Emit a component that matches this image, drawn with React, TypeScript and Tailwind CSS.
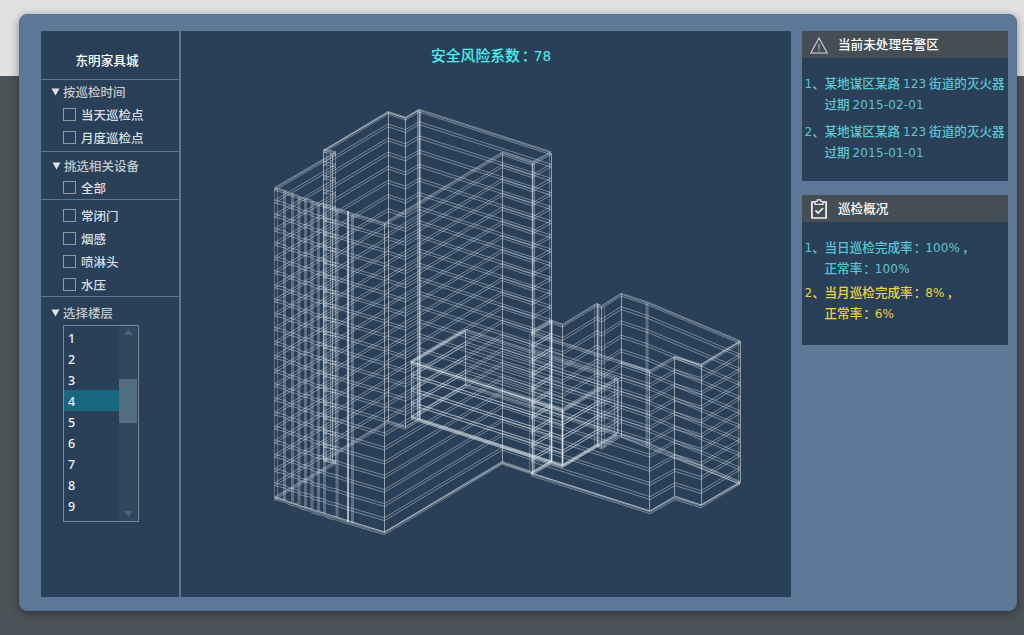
import React from "react";

type Point = [number, number];

const path = (points: Point[], dy: number) =>
  "M" + points.map(([x, y]) => `${x} ${(y + dy).toFixed(1)}`).join("L");

const levels = (parapet: number, count: number) => [
  0,
  ...Array.from({ length: count }, (_, i) => parapet + i * 14.13),
];

const towerFront: Point[] = [
  [274.5, 188.5], [285, 191], [289, 193.5], [297, 195.5], [301, 198], [310, 200],
  [314, 202.5], [323, 204.5], [328, 207], [337, 209], [347, 212.5], [384.5, 223.5],
];
const towerRight: Point[] = [[384.5, 223.5], [502, 153], [532, 163], [551, 152.5]];
const towerBack: Point[] = [[551, 152.5], [419, 110], [405.5, 118], [388, 112.2], [323.5, 151]];
const towerStair: Point[] = [[274.5, 188.5], [336, 152.5], [323.5, 150]];
const annex: Point[] = [
  [531, 333], [551, 321], [562.5, 325], [597, 304], [601.5, 306.5], [621, 294],
  [648, 303], [740, 341.5], [701, 365], [675, 357], [650, 371], [531, 333],
];
const bridge: Point[] = [[411, 362], [465.5, 330], [617, 378.5], [562.5, 410], [411, 362]];

function Floors({ points, steps, last = true }: { points: Point[]; steps: number[]; last?: boolean }) {
  return (
    <g fill="none" stroke="#d3dbe2" strokeWidth="0.9" strokeOpacity="0.5">
      {steps.map((s, i) => (
        <g key={i}>
          <path d={path(points, s - 0.8)} />
          <path d={path(points, s + 2)} />
          {(i === 0 || (last && i === steps.length - 1)) && <path d={path(points, s + 0.3)} />}
        </g>
      ))}
    </g>
  );
}

function Posts({ items, opacity, width = 1 }: { items: [number, number, number][]; opacity: number; width?: number }) {
  return (
    <g stroke="#e6ebee" strokeOpacity={opacity} strokeWidth={width}>
      {items.map(([x, a, b], i) => (
        <line key={i} x1={x} x2={x} y1={a} y2={b} />
      ))}
    </g>
  );
}

function Building() {
  const tower = levels(12.5, 22);
  const low = levels(13.5, 10);
  return (
    <svg className="block h-[450px] w-[490px]" viewBox="265 95 490 450">
      <Floors points={towerFront} steps={tower} />
      <Floors points={towerRight} steps={tower} />
      <Floors points={towerBack} steps={tower} />
      <Floors points={towerStair} steps={tower} />
      <Floors points={annex} steps={low} />
      <Floors points={bridge} steps={[0, 12.7, 26.8, 41, 55]} />
      <Posts
        opacity={0.3}
        items={[
          [274.5, 189, 497], [277.5, 189, 498], [326.5, 152, 461], [330.5, 152, 461],
          [335.5, 153, 463], [417.5, 110, 419], [420.5, 111, 420], [534.5, 163, 472],
          [549.5, 153, 462], [529.5, 334, 472], [738.5, 341, 484],
          [594.5, 304, 447], [604.5, 307, 448],
          [614.5, 378, 434], [618.5, 378, 434], [413.5, 362, 417], [417.5, 363, 419],
        ]}
      />
      <Posts
        opacity={0.27}
        width={3}
        items={[
          [284.5, 191, 500], [292.5, 194, 502], [299, 196, 504], [305.5, 199, 507],
          [312, 201, 509], [318.5, 204, 511], [324.5, 206, 513], [337, 209, 517],
          [352.5, 215, 523], [647, 303, 446], [419, 111, 420], [533, 163, 473], [598, 304, 447],
        ]}
      />
      <Posts
        opacity={0.55}
        items={[
          [323.5, 151, 460], [332.5, 154, 462], [388.5, 112, 422], [405.5, 118, 428],
          [419.5, 110, 419], [502.5, 153, 463], [532.5, 163, 473], [384.5, 223, 533],
          [551.5, 320, 462], [562.5, 325, 466], [597.5, 304, 447], [601.5, 306, 448],
          [621.5, 294, 437], [740.5, 341, 483], [701.5, 365, 505], [674.5, 357, 496],
          [649.5, 371, 511], [411.5, 362, 417], [465.5, 330, 386], [617.5, 378, 434],
          [551.5, 153, 320],
        ]}
      />
      <Posts
        opacity={0.75}
        width={1.8}
        items={[[348, 211, 522], [551.5, 320, 462], [562.5, 410, 466]]}
      />
      <g fill="none" stroke="#dce2e6" strokeOpacity="0.55">
        <path d="M323 151L388 112.5L405.5 118L419 110M274.5 497.5L384.5 532L502 463L532 473L551 461.5" />
        <path d="M411 417.5L562.5 466L617 434.5M465.5 330L411 362L562.5 410" strokeWidth="1.3" />
        <path d="M531 473L650 511L675 496L701 505L740 483M621 437L740 484M650 371L621 362M675 357L701 365L740 341.5" />
      </g>
    </svg>
  );
}

function Triangle() {
  return (
    <svg className="h-[8px] w-[9px] shrink-0" viewBox="0 0 9 8">
      <path d="M0.5 0.5H8.5L4.5 7.5Z" fill="#e2e4e6" />
    </svg>
  );
}

function GroupTitle({ children, className }: { children: React.ReactNode; className: string }) {
  return (
    <div className={`flex items-center gap-[3.5px] text-[12.5px] font-medium text-[#c3c8cc] ${className}`}>
      <Triangle />
      <span>{children}</span>
    </div>
  );
}

function CheckRow({ children, className = "h-[23px]" }: { children: React.ReactNode; className?: string }) {
  return (
    <div className={`flex items-center gap-[5px] pl-[22px] text-[12.5px] font-medium text-[#dcdfe1] ${className}`}>
      <span className="h-[13px] w-[13px] border border-[#92989d]" />
      <span className="pt-px">{children}</span>
    </div>
  );
}

function Num({ children }: { children: React.ReactNode }) {
  return <span className="font-['DejaVu_Sans','Noto_Sans_CJK_SC',sans-serif] text-[12px] font-normal tracking-[0.15px]">{children}</span>;
}

const Colon = () => <span className="inline-block w-[12.5px] whitespace-nowrap pl-[1px] tracking-[-4px]">：</span>;
const Comma = () => <span className="ml-[2px]">，</span>;

function Item({ index, first, second, className }: { index: number; first: React.ReactNode; second: React.ReactNode; className: string }) {
  return (
    <li className={`flex whitespace-nowrap text-[12.6px] font-medium leading-[21px] ${className}`}>
      <span className="w-[20px] shrink-0"><Num>{index}</Num>、</span>
      <div>
        <div className="h-[21px]">{first}</div>
        <div className="h-[21px]">{second}</div>
      </div>
    </li>
  );
}

export default function App() {
  const floors = [1, 2, 3, 4, 5, 6, 7, 8, 9];
  return (
    <div className="h-[635px] w-[1024px] overflow-hidden bg-[linear-gradient(to_bottom,#e2e2e2_76px,#4c5358_76px)] pl-[19px] pt-[14px] font-['Noto_Sans_CJK_SC',sans-serif]">
      <div className="flex h-[597px] w-[998px] rounded-[8px] border border-[#54718f] bg-[#5c7896] pl-[21px] pt-[16px] shadow-[0_2px_10px_rgba(0,0,0,0.4)]">
        <aside className="h-[566px] w-[138px] shrink-0 bg-[#2a4058]">
          <h1 className="flex h-[49px] items-center border-b border-[#5c7896] pl-[34.5px] pt-[10px] text-[12.6px] font-medium text-white">东明家具城</h1>
          <section className="h-[72px] border-b border-[#5c7896]">
            <GroupTitle className="h-[24px] pl-[9.5px]">按巡检时间</GroupTitle>
            <CheckRow className="-mt-px h-[23px]">当天巡检点</CheckRow>
            <CheckRow>月度巡检点</CheckRow>
          </section>
          <section className="h-[48px] border-b border-[#5c7896]">
            <GroupTitle className="h-[28px] pl-[10.5px]">挑选相关设备</GroupTitle>
            <CheckRow className="-mt-px h-[17px]">全部</CheckRow>
          </section>
          <section className="h-[97px] border-b border-[#5c7896] pt-[4px]">
            <CheckRow>常闭门</CheckRow>
            <CheckRow>烟感</CheckRow>
            <CheckRow>喷淋头</CheckRow>
            <CheckRow>水压</CheckRow>
          </section>
          <section>
            <GroupTitle className="h-[28px] pl-[9.5px] pt-[4px]">选择楼层</GroupTitle>
            <div className="ml-[22px] flex h-[197px] w-[76px] border border-[#7b8893] pr-px">
              <ul className="flex-1 pt-[1px] font-['Noto_Sans','Noto_Sans_CJK_SC',sans-serif] text-[12.5px] font-medium leading-[23px] text-[#f2f4f5]">
                {floors.map((n) => (
                  <li key={n} className={n === 4 ? "h-[21px] bg-[#17677e] pl-[4px]" : "h-[21px] pl-[4px]"}>{n}</li>
                ))}
              </ul>
              <div className="flex w-[18px] flex-col items-center bg-[#30475d] pb-[4px] pt-[3px]">
                <svg className="h-[6px] w-[9px]" viewBox="0 0 9 6"><path d="M4.5 0L9 6H0Z" fill="#48647a" /></svg>
                <div className="mt-[44px] h-[44px] w-[18px] bg-[#536e80]" />
                <svg className="mt-auto h-[6px] w-[9px]" viewBox="0 0 9 6"><path d="M4.5 6L9 0H0Z" fill="#48647a" /></svg>
              </div>
            </div>
          </section>
        </aside>

        <main className="ml-[2px] h-[566px] w-[610px] shrink-0 bg-[#2a4058]">
          <h2 className="h-[64px] pl-[250px] pt-[12px] text-[14.8px] font-medium leading-[23px] text-[#4df0ee]">
            安全风险系数<span className="inline-block w-[14px] whitespace-nowrap pl-[2px] tracking-[-5px]">：</span><span className="font-['DejaVu_Sans',sans-serif] text-[13.6px] font-normal">78</span>
          </h2>
          <div className="pl-[84px]">
            <Building />
          </div>
        </main>

        <div className="ml-[11px] flex w-[206px] shrink-0 flex-col gap-[14px]">
          <section className="h-[150px] bg-[#2a4058]">
            <h3 className="flex h-[27px] items-center bg-[#444e54] pl-[8px] text-[12.6px] font-medium text-white">
              <svg className="mr-[10px] mt-[2px] h-[17px] w-[18px]" viewBox="0 0 18 17" fill="none" stroke="#d7dadc">
                <path d="M9 1L17.3 16H0.7Z" strokeWidth="1.1" />
                <path d="M9 6.5V12M9 13V14.3" stroke="#9ca2a5" strokeWidth="1.4" />
              </svg>
              当前未处理告警区
            </h3>
            <ul className="pl-[2.5px] pt-[14px] text-[#5cc5d1]">
              <Item index={1} className="mb-[6px]" first={<>某地谋区某路 <Num>123</Num> 街道的灭火器</>} second={<>过期 <Num>2015-02-01</Num></>} />
              <Item index={2} className="" first={<>某地谋区某路 <Num>123</Num> 街道的灭火器</>} second={<>过期 <Num>2015-01-01</Num></>} />
            </ul>
          </section>
          <section className="h-[150px] bg-[#2a4058]">
            <h3 className="flex h-[27px] items-center bg-[#444e54] pl-[9px] text-[12.6px] font-medium text-white">
              <svg className="mr-[11px] h-[20px] w-[16px]" viewBox="0 0 16 20" fill="none" stroke="#f1f3f3">
                <path d="M0.9 3H15.1V19H0.9Z" strokeWidth="1.7" />
                <path d="M4 2.5H6.2V0.8H9.8V2.5H12V5.3H4Z" fill="#444e54" strokeWidth="1.2" />
                <path d="M4.5 11.3L7.2 14L12 9" strokeWidth="1.7" />
              </svg>
              巡检概况
            </h3>
            <ul className="pl-[2.5px] pt-[14px]">
              <Item index={1} className="mb-[3px] text-[#5cc5d1]" first={<>当日巡检完成率<Colon /><Num>100%</Num><Comma /></>} second={<>正常率<Colon /><Num>100%</Num></>} />
              <Item index={2} className="text-[#ecd246]" first={<>当月巡检完成率<Colon /><Num>8%</Num><Comma /></>} second={<>正常率<Colon /><Num>6%</Num></>} />
            </ul>
          </section>
        </div>
      </div>
    </div>
  );
}
